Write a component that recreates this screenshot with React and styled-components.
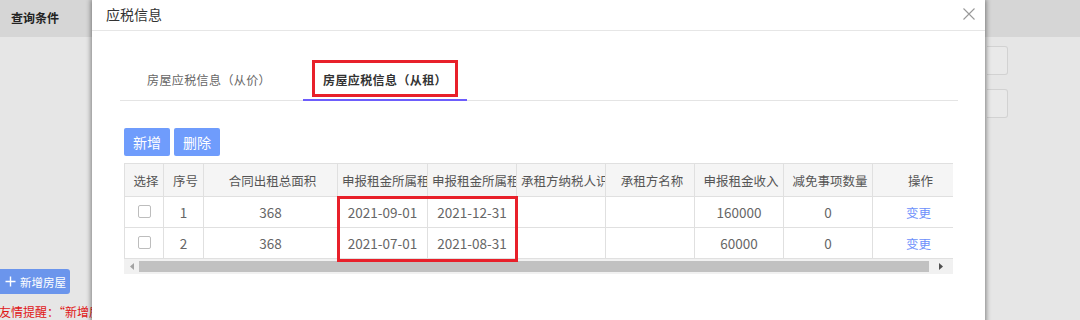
import React from 'react'
import styled, { createGlobalStyle } from 'styled-components'

const GlobalStyle = createGlobalStyle`
  body {
    margin: 0;
    font-family: "Noto Sans CJK SC", "Noto Sans", sans-serif;
  }
`

const columns = [
  { title: '选择', width: 39 },
  { title: '序号', width: 40 },
  { title: '合同出租总面积', width: 134 },
  { title: '申报租金所属租期起', width: 90 },
  { title: '申报租金所属租期止', width: 89 },
  { title: '承租方纳税人识别号', width: 89 },
  { title: '承租方名称', width: 89 },
  { title: '申报租金收入', width: 89 },
  { title: '减免事项数量', width: 89 },
  { title: '操作', width: 92 },
]

const rows = [
  { no: 1, area: 368, start: '2021-09-01', end: '2021-12-31', payerId: '', payer: '', income: 160000, relief: 0 },
  { no: 2, area: 368, start: '2021-07-01', end: '2021-08-31', payerId: '', payer: '', income: 60000, relief: 0 },
]

const App = () => {
  return (
    <Page>
      <GlobalStyle />
      <TopBar>查询条件</TopBar>
      <Content>
        <LeftCol>
          <AddHouseButton>
            <svg width="11" height="11" viewBox="0 0 11 11">
              <path d="M5.5 0.5v10M0.5 5.5h10" stroke="#fff" strokeWidth="1.4" />
            </svg>
            新增房屋
          </AddHouseButton>
          <Tip>友情提醒：“新增房屋后请及时完善信息”</Tip>
        </LeftCol>
        <RightCol>
          <FieldBox />
          <FieldBox />
        </RightCol>
      </Content>

      <Modal>
        <ModalHeader>
          <ModalTitle>应税信息</ModalTitle>
          <CloseButton>
            <svg width="12" height="12" viewBox="0 0 12 12">
              <path d="M0.5 0.5l11 11M11.5 0.5l-11 11" stroke="#999" strokeWidth="1.1" />
            </svg>
          </CloseButton>
        </ModalHeader>
        <ModalBody>
          <TabBar>
            <Tab>房屋应税信息（从价）</Tab>
            <Tab $active>房屋应税信息（从租）</Tab>
          </TabBar>
          <Toolbar>
            <ActionButton>新增</ActionButton>
            <ActionButton>删除</ActionButton>
          </Toolbar>
          <TableWrap>
            <Table>
              <colgroup>
                {columns.map(c => <col key={c.title} style={{ width: c.width }} />)}
              </colgroup>
              <thead>
                <tr>
                  {columns.map(c => <Th key={c.title}><Clip>{c.title}</Clip></Th>)}
                </tr>
              </thead>
              <tbody>
                {rows.map(r => (
                  <tr key={r.no}>
                    <Td><Checkbox /></Td>
                    <Td>{r.no}</Td>
                    <Td>{r.area}</Td>
                    <Td>{r.start}</Td>
                    <Td>{r.end}</Td>
                    <Td>{r.payerId}</Td>
                    <Td>{r.payer}</Td>
                    <Td>{r.income}</Td>
                    <Td>{r.relief}</Td>
                    <Td><LinkText>变更</LinkText></Td>
                  </tr>
                ))}
              </tbody>
            </Table>
            <ScrollBar>
              <ScrollArrow>
                <svg width="4" height="7" viewBox="0 0 4 7"><path d="M4 0v7L0 3.5z" fill="#a3a3a3" /></svg>
              </ScrollArrow>
              <Thumb />
              <ScrollArrow $wide>
                <svg width="4" height="7" viewBox="0 0 4 7"><path d="M0 0v7l4-3.5z" fill="#505050" /></svg>
              </ScrollArrow>
            </ScrollBar>
          </TableWrap>
        </ModalBody>

        <Mark $left={220} $top={60} $w={146} $h={37} />
        <Mark $left={245} $top={196} $w={181} $h={66} />
      </Modal>
    </Page>
  )
}

export default App

const Page = styled.div`
  position: relative;
  width: 1080px;
  height: 320px;
  overflow: hidden;
  background-color: #e6e6e6;
`
const TopBar = styled.div`
  height: 37px;
  line-height: 36px;
  padding-left: 11px;
  background-color: #d6d6d6;
  color: #222;
  font-size: 12px;
  font-weight: bold;
`
const Content = styled.div`
  display: flex;
  justify-content: space-between;
  height: 283px;
`
const LeftCol = styled.div`
  display: flex;
  flex-direction: column;
  align-items: flex-start;
  padding-top: 232px;
`
const AddHouseButton = styled.button`
  display: flex;
  align-items: center;
  gap: 4px;
  width: 70px;
  height: 25px;
  padding: 0 0 0 5px;
  border: none;
  border-radius: 0 3px 3px 0;
  background-color: #6b95ec;
  color: #fff;
  font-family: inherit;
  font-size: 11.5px;
  white-space: nowrap;
`
const Tip = styled.div`
  margin-top: 9px;
  margin-left: -1px;
  color: #e01515;
  font-size: 12px;
  white-space: nowrap;
`
const RightCol = styled.div`
  display: flex;
  flex-direction: column;
  gap: 14px;
  padding-top: 9px;
  margin-right: 72px;
`
const FieldBox = styled.div`
  width: 20px;
  height: 27px;
  border: 1px solid #d2d2d2;
  border-left: none;
  border-radius: 0 3px 3px 0;
  background-color: #e9e9e9;
`
const Modal = styled.div`
  position: absolute;
  left: 92px;
  top: 0;
  width: 893px;
  height: 340px;
  background-color: #fff;
  box-shadow: 0 0 5px 1px rgba(0, 0, 0, 0.45);
`
const ModalHeader = styled.div`
  display: flex;
  align-items: center;
  justify-content: space-between;
  height: 31px;
  padding: 0 10px 0 14px;
  border-bottom: 1px solid #e6e6e6;
  box-sizing: border-box;
`
const ModalTitle = styled.span`
  margin-top: -3px;
  color: #333;
  font-size: 14px;
`
const CloseButton = styled.span`
  display: flex;
  margin-top: -3px;
`
const ModalBody = styled.div`
  padding: 29px 27px 0 28px;
`
const TabBar = styled.div`
  display: flex;
  gap: 12px;
  height: 40px;
  padding-left: 7px;
  border-bottom: 1px solid #e4e4e4;
`
const Tab = styled.div`
  display: flex;
  align-items: center;
  padding: 0 20px 1px;
  margin-bottom: -1px;
  border-bottom: 2px solid ${({ $active }) => ($active ? '#6d5dfc' : 'transparent')};
  color: ${({ $active }) => ($active ? '#333' : '#666')};
  font-size: 12px;
  letter-spacing: 0.4px;
  font-weight: ${({ $active }) => ($active ? 'bold' : 'normal')};
  white-space: nowrap;
`
const Toolbar = styled.div`
  display: flex;
  gap: 4px;
  margin: 27px 0 0 4px;
`
const ActionButton = styled.button`
  width: 46px;
  height: 28px;
  padding: 0;
  border: none;
  border-radius: 2px;
  background-color: #6f9cfc;
  color: #fff;
  font-family: inherit;
  font-size: 14px;
`
const TableWrap = styled.div`
  width: 829px;
  margin: 7px 0 0 4px;
  overflow: hidden;
`
const Table = styled.table`
  width: 840px;
  table-layout: fixed;
  border-collapse: collapse;
  border-top: 1px solid #e0e0e0;
  border-left: 1px solid #e0e0e0;
`
const Th = styled.th`
  height: 32px;
  padding: 0 0 0 4px;
  border-right: 1px solid #e0e0e0;
  border-bottom: 1px solid #e0e0e0;
  background-color: #f5f5f5;
  color: #555;
  font-size: 12.5px;
  font-weight: normal;
  text-align: center;
`
const Clip = styled.div`
  overflow: hidden;
  white-space: nowrap;
`
const Td = styled.td`
  height: 30px;
  padding: 0;
  border-right: 1px solid #e0e0e0;
  border-bottom: 1px solid #e0e0e0;
  color: #666;
  font-size: 13.5px;
  text-align: center;
  white-space: nowrap;
  overflow: hidden;
`
const Checkbox = styled.span`
  display: inline-block;
  width: 11px;
  height: 11px;
  margin-top: 3px;
  border: 1px solid #bdbdbd;
  border-radius: 2px;
  background-color: #fff;
`
const LinkText = styled.span`
  color: #6c8ffb;
  font-size: 12.5px;
`
const ScrollBar = styled.div`
  display: flex;
  align-items: center;
  height: 15px;
  background-color: #f1f1f1;
`
const ScrollArrow = styled.div`
  display: flex;
  align-items: center;
  justify-content: center;
  width: ${({ $wide }) => ($wide ? '24px' : '15px')};
  height: 15px;
`
const Thumb = styled.div`
  flex: 1;
  height: 11px;
  background-color: #c1c1c1;
`
const Mark = styled.div`
  position: absolute;
  left: ${({ $left }) => $left}px;
  top: ${({ $top }) => $top}px;
  width: ${({ $w }) => $w}px;
  height: ${({ $h }) => $h}px;
  border: 3px solid #e8202a;
  box-sizing: border-box;
  pointer-events: none;
`
